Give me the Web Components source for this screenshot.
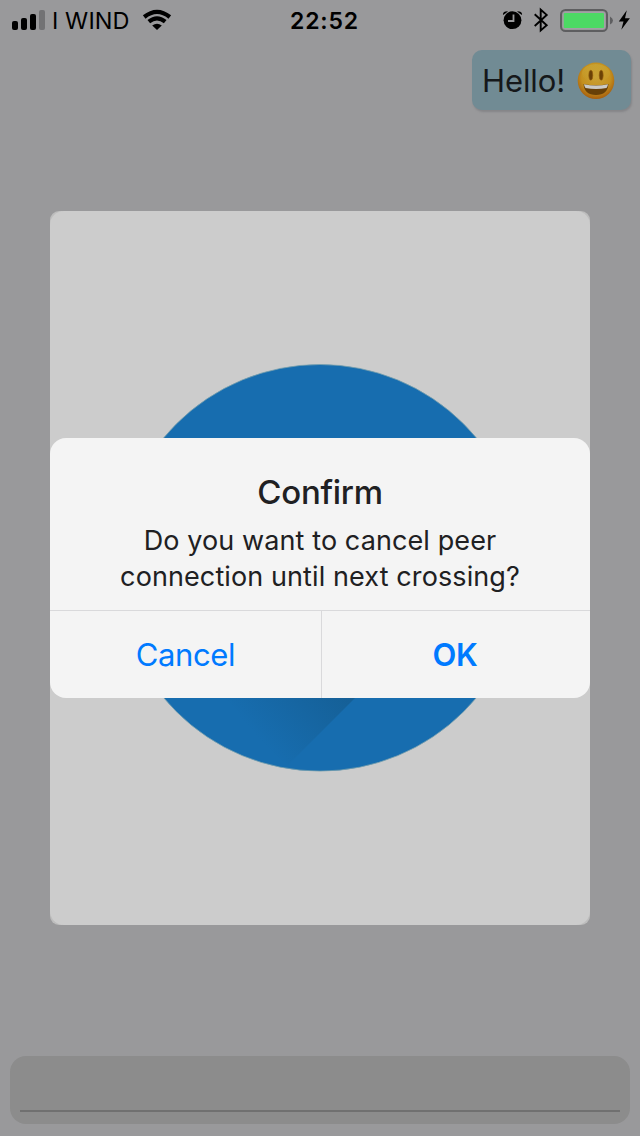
<!DOCTYPE html>
<html lang="en"><head><meta charset="utf-8"><title>Chat</title>
<style>html,body{margin:0;height:100%;overflow:hidden;background:#99999b}</style></head>
<body><chat-screen></chat-screen>
<script>
const define=(name,html)=>customElements.define(name,class extends HTMLElement{
  constructor(){super();const t=document.createElement('template');t.innerHTML=html;
    this.attachShadow({mode:'open'}).append(t.content.cloneNode(true));}
});

define('signal-bars',`<style>:host{display:block;width:34px;height:40px}svg{display:block}</style>
<svg width="34" height="40"><rect x="0" y="21" width="6" height="9" rx="2"/><rect x="9" y="18" width="6" height="12" rx="2"/><rect x="18" y="14" width="6" height="16" rx="2"/><rect x="27" y="10" width="6" height="20" rx="2" fill="#727274"/></svg>`);

define('wifi-icon',`<style>:host{display:block}svg{display:block}</style>
<svg width="30" height="40" viewBox="0 0 30 40"><g fill="none" stroke="#000" stroke-width="4.2"><path d="M2.2 17Q15 6.6 27.800 17"/><path d="M6.8 21.700Q15 15 23.200 21.700"/></g><path d="M10.200 25.600Q15 21.800 19.800 25.600L15 30Z"/></svg>`);

define('status-icons',`<style>:host{display:block}svg{display:block}</style>
<svg width="130" height="40" viewBox="500 0 130 40">
<circle cx="512.5" cy="20.200" r="8.900"/><path d="M503 15Q502.500 11 508 11.200L506 13ZM522 15Q522.500 11 517 11.200L519 13Z"/>
<path d="M513.500 14.500V21H508" fill="none" stroke="#99999b" stroke-width="1.800"/>
<path d="M534.7 14.2L546.7 25.2L540.7 30.5V9.7L546.7 14.9L534.7 26" fill="none" stroke="#000" stroke-width="1.9"/>
<rect x="561" y="10" width="46" height="21" rx="4.5" fill="none" stroke="#5e5e60" stroke-width="2"/>
<rect x="563" y="12" width="42" height="17" rx="2" fill="#a3a0a6"/><rect x="563.8" y="13" width="40.2" height="15" rx="1" fill="#4cd964"/>
<path d="M610 16.4Q613 18.3 613 20.5Q613 22.8 610 24.6Z" fill="#5e5e60"/>
<path d="M626.800 10.200L618.800 21.500H623.500L621.300 29.800L629.900 18.300H625Z"/></svg>`);

define('status-bar',`<style>:host{display:grid;grid-template-columns:1fr auto 1fr;height:40px;line-height:40px;color:#000;font-family:Inter,sans-serif}
.l{display:flex;padding-left:12px}.c{margin:1px 0 0 6px;font-size:23.5px;width:79px;letter-spacing:.1px;white-space:nowrap}.w{margin-left:11px}
.t{font-size:23px;font-weight:600;letter-spacing:.8px;padding:1px 0 0 9px}.r{display:flex;justify-content:flex-end;padding-right:10px}</style>
<div class="l"><signal-bars></signal-bars><span class="c">I WIND</span><wifi-icon class="w"></wifi-icon></div><div class="t">22:52</div><div class="r"><status-icons></status-icons></div>`);

define('grin-emoji',`<style>:host{display:block;margin-top:1px}svg{display:block}</style>
<svg width="38" height="38" viewBox="577 62 38 38"><defs><radialGradient id="f" cx=".5" cy=".4" r=".6"><stop offset="0" stop-color="#c9a034"/><stop offset=".65" stop-color="#c4911f"/><stop offset="1" stop-color="#a65d0d"/></radialGradient><linearGradient id="h" x2="0" y2="1"><stop stop-color="#cfb846" stop-opacity=".4"/><stop offset="1" stop-color="#cfb846" stop-opacity="0"/></linearGradient></defs>
<circle cx="596" cy="80.800" r="18.300" fill="url(#f)"/><ellipse cx="596" cy="73" rx="14" ry="9" fill="url(#h)"/>
<g fill="#6b4106" stroke="#98610f" stroke-width=".6"><ellipse cx="590.800" cy="75.200" rx="2" ry="5"/><ellipse cx="601.200" cy="75.200" rx="2" ry="5"/></g>
<path d="M583.5 84Q596 86.500 608.5 84Q607.6 95 596 95Q584.400 95 583.500 84Z" fill="#674008"/><path d="M584 84.300Q596 86.700 608 84.300Q607.800 86.500 606.500 88Q596 90 585.500 88Q584.200 86.500 584 84.300Z" fill="#cbcac5"/></svg>`);

define('chat-bubble',`<style>:host{display:flex;align-items:center;box-sizing:border-box;width:159px;height:60px;padding:0 16px 0 10px;justify-content:space-between;border-radius:10px;background:#718b94;box-shadow:1px 2px 2px #858588;color:#15181a;font:31px Inter,sans-serif;white-space:nowrap}
span{letter-spacing:-.1px}</style><span><slot></slot></span><grin-emoji></grin-emoji>`);

define('photo-card',`<style>:host{display:flex;align-items:center;justify-content:center;box-sizing:border-box;width:540px;height:714px;border-radius:9px;background:#bdbdbd;overflow:hidden}
div{display:flex;align-items:center;justify-content:center;width:540px;height:714px;border-radius:14px;background:#ccc}svg{display:block}</style>
<div><svg width="408" height="408" viewBox="116 364 408 408"><defs><linearGradient id="s" gradientUnits="userSpaceOnUse" x1="345" y1="675" x2="265" y2="745"><stop stop-color="#155e94"/><stop offset="1" stop-color="#176daf"/></linearGradient></defs><circle cx="320" cy="567.8" r="203.300" fill="#176daf" stroke="#76a0ad" stroke-width=".8"/><path d="M357 696L288 765L195 696Z" fill="url(#s)"/></svg></div>`);

define('message-field',`<style>:host{display:flex;align-items:flex-end;box-sizing:border-box;width:620px;height:68px;padding:0 10px 12px;border-radius:16px;background:#8c8c8c}div{flex:1;height:2px;background:#707070}</style><div></div>`);

define('confirm-dialog',`<style>:host{display:grid;grid-template-rows:172px 87px;row-gap:1px;width:540px;height:260px;border-radius:16px;overflow:hidden;background:#f4f4f4;color:#202022;font-family:Inter,sans-serif;text-align:center}
h1{margin:33px 0 0;font-size:33px;line-height:42px;font-weight:500;letter-spacing:-.3px}p{margin:10px 0 0;font-size:27px;line-height:36px;letter-spacing:.1px}
footer{display:grid;grid-template-columns:272px 1fr;box-shadow:0 -1px #d9d9db;color:#007aff;line-height:88px;font-size:31px}
footer div:first-child{border-right:1px solid #d9d9db;letter-spacing:-.4px}b{font-weight:600;letter-spacing:-.2px;margin-right:2px}</style>
<section><h1>Confirm</h1><p>Do you want to cancel peer<br>connection until next crossing?</p></section><footer><div>Cancel</div><div><b>OK</b></div></footer>`);

define('chat-screen',`<style>:host{display:flex;flex-direction:column;position:relative;width:640px;height:1136px;background:#99999b}
chat-bubble{margin:10px 9px 0 auto}photo-card{margin:101px auto 0}message-field{margin:auto auto 12px}
confirm-dialog{position:absolute;left:50px;top:438px}</style>
<status-bar></status-bar><chat-bubble>Hello!</chat-bubble><photo-card></photo-card><message-field></message-field><confirm-dialog></confirm-dialog>`);
</script></body></html>
